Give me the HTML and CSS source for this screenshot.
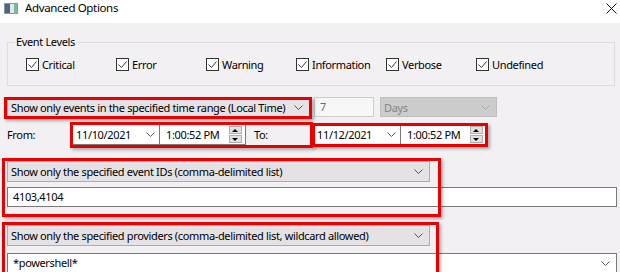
FILE: index.html
```html
<!DOCTYPE html>
<html lang="en">
<head>
    <meta charset="UTF-8">
    <meta name="viewport" content="width=device-width, initial-scale=1.0">
    <title>Advanced Options</title>
    <link rel="stylesheet" href="styles.css">
</head>
<body>
    <div class="window">
        <header class="titlebar">
            <svg class="app-icon" width="14" height="11" viewBox="0 0 14 11">
                <rect x="0.5" y="0.5" width="13" height="10" fill="#e4e9ee" stroke="#8b98a4"/>
                <rect x="1" y="1" width="5" height="9" fill="#4f6478"/>
                <rect x="10" y="1" width="3" height="9" fill="#79b9a2"/>
            </svg>
            <span class="title">Advanced Options</span>
            <svg class="close" width="11" height="11" viewBox="0 0 11 11">
                <path d="M0.5 0.5 L10.5 10.5 M10.5 0.5 L0.5 10.5" stroke="#111" stroke-width="1"/>
            </svg>
        </header>

        <div class="content">
            <fieldset class="levels">
                <legend>Event Levels</legend>
                <div class="checks">
                    <label class="check"><span class="box"><svg width="11" height="11" viewBox="0 0 11 11"><polyline points="1.5,5.5 4.5,8.5 9.5,2.5" fill="none" stroke="#3a3a3a"/></svg></span>Critical</label>
                    <label class="check"><span class="box"><svg width="11" height="11" viewBox="0 0 11 11"><polyline points="1.5,5.5 4.5,8.5 9.5,2.5" fill="none" stroke="#3a3a3a"/></svg></span>Error</label>
                    <label class="check"><span class="box"><svg width="11" height="11" viewBox="0 0 11 11"><polyline points="1.5,5.5 4.5,8.5 9.5,2.5" fill="none" stroke="#3a3a3a"/></svg></span>Warning</label>
                    <label class="check"><span class="box"><svg width="11" height="11" viewBox="0 0 11 11"><polyline points="1.5,5.5 4.5,8.5 9.5,2.5" fill="none" stroke="#3a3a3a"/></svg></span>Information</label>
                    <label class="check"><span class="box"><svg width="11" height="11" viewBox="0 0 11 11"><polyline points="1.5,5.5 4.5,8.5 9.5,2.5" fill="none" stroke="#3a3a3a"/></svg></span>Verbose</label>
                    <label class="check"><span class="box"><svg width="11" height="11" viewBox="0 0 11 11"><polyline points="1.5,5.5 4.5,8.5 9.5,2.5" fill="none" stroke="#3a3a3a"/></svg></span>Undefined</label>
                </div>
            </fieldset>

            <div class="range-row">
                <div class="combo range">
                    <span>Show only events in the specified time range (Local Time)</span>
                    <svg class="chev" width="9" height="5" viewBox="0 0 9 5"><polyline points="0.5,0.5 4.5,4.5 8.5,0.5" fill="none" stroke="#555"/></svg>
                </div>
                <div class="num">7</div>
                <div class="combo days">
                    <span>Days</span>
                    <svg class="chev" width="9" height="5" viewBox="0 0 9 5"><polyline points="0.5,0.5 4.5,4.5 8.5,0.5" fill="none" stroke="#a5a5a5"/></svg>
                </div>
            </div>

            <div class="from-row">
                <span class="lbl">From:</span>
                <div class="span-from">
                    <div class="picker">
                        <div class="date">
                            <span>11/10/2021</span>
                            <svg class="chev" width="9" height="5" viewBox="0 0 9 5"><polyline points="0.5,0.5 4.5,4.5 8.5,0.5" fill="none" stroke="#555"/></svg>
                        </div>
                        <div class="time">
                            <span>1:00:52 PM</span>
                            <div class="spin"><span class="up"></span><span class="down"></span></div>
                        </div>
                    </div>
                    <span class="lbl to">To:</span>
                </div>
                <div class="picker to-picker">
                    <div class="date">
                        <span>11/12/2021</span>
                        <svg class="chev" width="9" height="5" viewBox="0 0 9 5"><polyline points="0.5,0.5 4.5,4.5 8.5,0.5" fill="none" stroke="#555"/></svg>
                    </div>
                    <div class="time">
                        <span>1:00:52 PM</span>
                        <div class="spin"><span class="up"></span><span class="down"></span></div>
                    </div>
                </div>
            </div>

            <div class="filter ids">
                <div class="combo">
                    <span>Show only the specified event IDs (comma-delimited list)</span>
                    <svg class="chev" width="9" height="5" viewBox="0 0 9 5"><polyline points="0.5,0.5 4.5,4.5 8.5,0.5" fill="none" stroke="#555"/></svg>
                </div>
                <div class="textbox">4103,4104</div>
            </div>

            <div class="filter providers">
                <div class="combo">
                    <span>Show only the specified providers (comma-delimited list, wildcard allowed)</span>
                    <svg class="chev" width="9" height="5" viewBox="0 0 9 5"><polyline points="0.5,0.5 4.5,4.5 8.5,0.5" fill="none" stroke="#555"/></svg>
                </div>
                <div class="textbox edit">
                    <span>*powershell*</span>
                    <svg class="chev" width="9" height="5" viewBox="0 0 9 5"><polyline points="0.5,0.5 4.5,4.5 8.5,0.5" fill="none" stroke="#555"/></svg>
                </div>
            </div>
        </div>
    </div>
</body>
</html>
```

FILE: styles.css
```css
* {
    box-sizing: border-box;
}
body {
    margin: 0;
    font-family: "Noto Sans", "Open Sans", sans-serif;
    font-size: 11px;
    letter-spacing: -0.35px;
    color: #000;
    background-color: #f3f0f3;
}
.window {
    width: 620px;
    height: 272px;
    overflow: hidden;
}
.titlebar {
    height: 23px;
    background-color: #fff;
    display: flex;
    align-items: flex-start;
    padding: 3px 0 0 4px;
}
.app-icon {
    display: block;
}
.title {
    margin: -3px 0 0 7px;
    line-height: 16px;
    font-size: 11.5px;
}
.close {
    margin-left: auto;
    margin-right: 3px;
}
.content {
    padding-left: 7px;
}
.levels {
    margin: 11px 5px 0 0;
    padding: 6px 0 12px 18px;
    border: 1px solid #dcdcdc;
}
.levels legend {
    margin-left: -11px;
    padding: 0 1px;
    line-height: 16px;
}
.checks {
    display: flex;
    height: 17px;
}
.check {
    width: 90px;
    display: flex;
    align-items: center;
}
.box {
    width: 13px;
    height: 13px;
    border: 1px solid #333;
    background-color: #fff;
    margin-right: 3px;
    display: block;
}
.box svg {
    display: block;
}
.combo {
    height: 21px;
    display: flex;
    align-items: center;
    justify-content: space-between;
    background-color: #e5e2e6;
    border: 1px solid #adadad;
    padding: 0 6px 0 3px;
    white-space: nowrap;
    flex: none;
}
.chev {
    display: block;
    flex: none;
}
.range-row {
    display: flex;
    margin-top: 11px;
}
.combo.range {
    width: 303px;
    position: relative;
}
.num {
    width: 60px;
    height: 20px;
    margin-left: 4px;
    border: 1px solid #cccccc;
    background-color: #f8f7f8;
    color: #6d6d6d;
    padding-left: 5px;
    line-height: 18px;
}
.combo.days {
    width: 117px;
    height: 20px;
    margin-left: 6px;
    background-color: #cccccc;
    border-color: #bfbfbf;
    color: #838383;
}
.from-row {
    display: flex;
    align-items: center;
    margin-top: 5px;
    height: 22px;
}
.lbl {
    width: 65px;
}
.lbl.to {
    width: auto;
    margin-left: 8px;
}
.span-from {
    width: 239px;
    display: flex;
    align-items: center;
    position: relative;
}
.picker {
    width: 174px;
    height: 22px;
    display: flex;
    background-color: #fff;
    border: 1px solid #7a7a7a;
}
.to-picker {
    margin-left: 2px;
    position: relative;
}
.date {
    width: 87px;
    display: flex;
    align-items: center;
    justify-content: space-between;
    padding: 0 4px 0 3px;
    border-right: 1px solid #7a7a7a;
}
.time {
    flex: 1;
    display: flex;
    align-items: center;
    justify-content: space-between;
    padding: 0 3px 0 6px;
}
.spin {
    width: 13px;
    height: 17px;
    display: flex;
    flex-direction: column;
    gap: 1px;
}
.spin span {
    flex: 1;
    background-color: #e1e1e1;
    border: 1px solid #adadad;
    position: relative;
}
.spin .up::before,
.spin .down::before {
    content: '';
    position: absolute;
    left: 2px;
    border-left: 3.5px solid transparent;
    border-right: 3.5px solid transparent;
}
.spin .up::before {
    top: 2px;
    border-bottom: 3px solid #000;
}
.spin .down::before {
    top: 2px;
    border-top: 3px solid #000;
}
.filter {
    position: relative;
}
.filter .combo {
    width: 423px;
}
.ids {
    margin-top: 16px;
}
.providers {
    margin-top: 18px;
}
.textbox {
    width: 610px;
    height: 20px;
    margin-top: 5px;
    border: 1px solid #7a7a7a;
    background-color: #fff;
    padding-left: 5px;
    line-height: 18px;
}
.textbox.edit {
    margin-top: 7px;
    display: flex;
    align-items: center;
    justify-content: space-between;
    padding-right: 6px;
}

/* red annotation frames drawn over the dialog */
.combo.range::after,
.span-from::after,
.to-picker::after,
.filter::after {
    content: '';
    position: absolute;
    border: 3px solid #e60000;
    box-shadow: 2px 2px 3px rgba(0, 0, 0, 0.3);
    z-index: 2;
}
.combo.range::after {
    left: -4px;
    right: -3px;
    top: -1px;
    bottom: -2px;
}
.span-from::after,
.to-picker::after {
    left: -2px;
    right: -2px;
    top: -1px;
    bottom: -3px;
}
.ids::after {
    left: -5px;
    top: -3px;
    width: 433px;
    height: 53px;
}
.providers::after {
    left: -5px;
    top: -3px;
    width: 431px;
    height: 50px;
}
```
